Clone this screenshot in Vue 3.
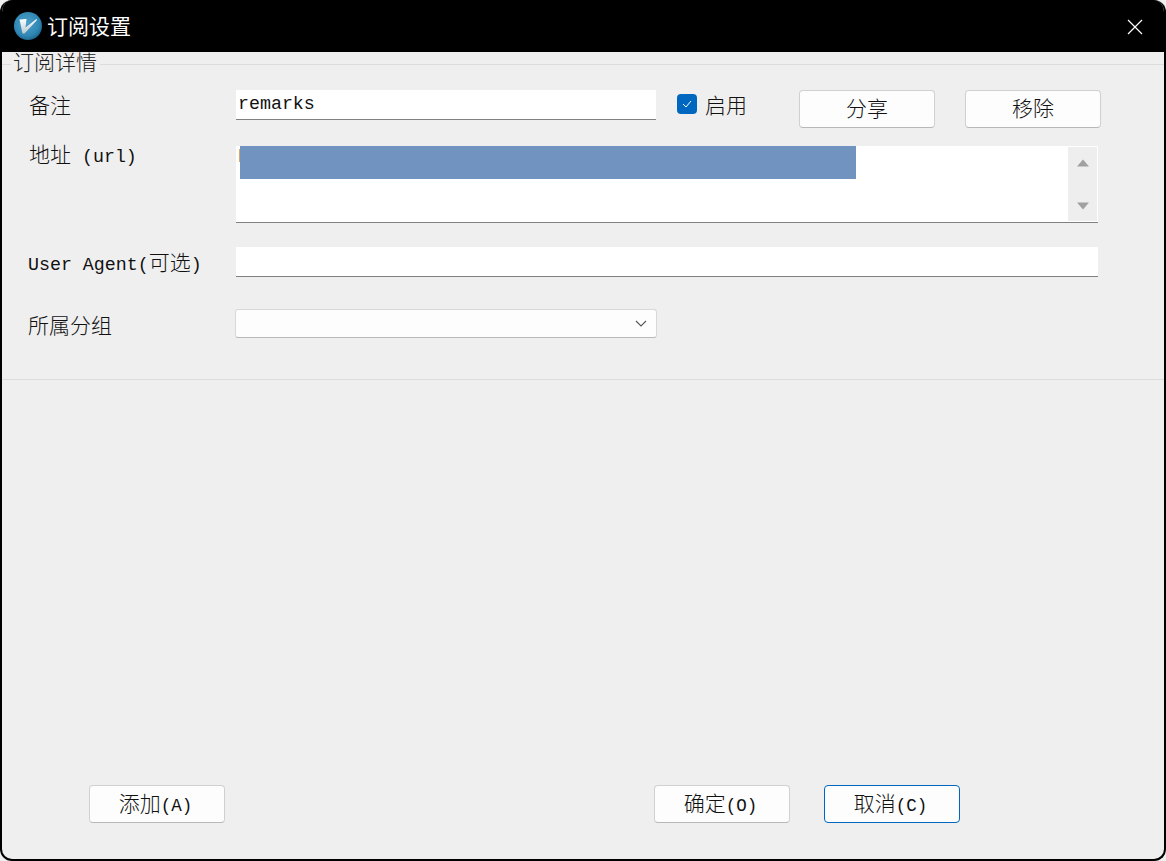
<script setup>
const buttonsTop = [
  { id: 'share', label: '分享' },
  { id: 'remove', label: '移除' },
]
</script>

<template>
  <div class="window">
    <header class="titlebar">
      <svg class="logo" width="30" height="30" viewBox="0 0 30 30">
        <defs>
          <radialGradient id="lg" cx="0.45" cy="0.4" r="0.65">
            <stop offset="0" stop-color="#4ea3c9" />
            <stop offset="0.7" stop-color="#2f86b3" />
            <stop offset="1" stop-color="#1b5f88" />
          </radialGradient>
          <linearGradient id="vg" x1="0" y1="0" x2="0" y2="1">
            <stop offset="0" stop-color="#ffffff" />
            <stop offset="1" stop-color="#b9c9d2" />
          </linearGradient>
        </defs>
        <circle cx="15" cy="15" r="14" fill="url(#lg)" />
        <path d="M6.5 8.5 L13.5 8 L12.5 16.5 L23.5 8 L24 9 L11.5 22.5 L9.5 22.5 Z" fill="url(#vg)" />
      </svg>
      <span class="title cj">订阅设置</span>
      <svg class="close" width="16" height="16" viewBox="0 0 16 16">
        <path d="M1 1 L15 15 M15 1 L1 15" stroke="#fff" stroke-width="1.2" fill="none" />
      </svg>
    </header>

    <fieldset class="group">
      <legend class="legend cj">订阅详情</legend>

      <div class="row row-remarks">
        <label class="label cj label-remarks">备注</label>
        <div class="input input-short mono">remarks</div>
        <span class="check">
          <svg width="12" height="10" viewBox="0 0 12 10">
            <path d="M2 5 L5 8 L10 2" stroke="#fff" stroke-width="1" fill="none" />
          </svg>
        </span>
        <span class="check-label cj">启用</span>
        <button v-for="b in buttonsTop" :key="b.id" class="btn cj" :class="'btn-' + b.id">{{ b.label }}</button>
      </div>

      <div class="row row-url">
        <label class="label label-url"><span class="cj">地址</span><span class="mono"> (url)</span></label>
        <div class="textarea">
          <div class="textarea-text mono">h<span class="selection"></span></div>
          <div class="scroll">
            <svg width="12" height="8" viewBox="0 0 12 8"><path d="M6 0.5 L12 7.5 L0 7.5 Z" fill="#a0a0a0" /></svg>
            <svg width="12" height="8" viewBox="0 0 12 8"><path d="M0 0.5 L12 0.5 L6 7.5 Z" fill="#a0a0a0" /></svg>
          </div>
        </div>
      </div>

      <div class="row row-ua">
        <label class="label label-ua"><span class="mono">User Agent(</span><span class="cj">可选</span><span class="mono">)</span></label>
        <div class="input input-long"></div>
      </div>

      <div class="row row-group">
        <label class="label cj label-group">所属分组</label>
        <div class="combo">
          <svg width="12" height="7" viewBox="0 0 12 7"><path d="M1 1 L6 6 L11 1" stroke="#555" stroke-width="1.1" fill="none" /></svg>
        </div>
      </div>
    </fieldset>

    <div class="spacer"></div>

    <footer class="footer">
      <button class="btn foot-btn foot-add"><span class="cj">添加</span><span class="mono foot-mono">(A)</span></button>
      <button class="btn foot-btn foot-ok"><span class="cj">确定</span><span class="mono foot-mono">(O)</span></button>
      <button class="btn foot-btn btn-focus"><span class="cj">取消</span><span class="mono foot-mono">(C)</span></button>
    </footer>
  </div>
</template>

<style>
html, body { margin: 0; background: #f0f0f0; }
</style>

<style scoped>
.cj {
  font-family: "Noto Sans CJK SC", sans-serif;
  font-weight: 300;
  font-size: 21px;
}
.mono {
  font-family: "Liberation Mono", monospace;
  font-size: 18.3px;
}
.foot-mono { font-size: 17.5px; }
.window {
  box-sizing: border-box;
  width: 1166px;
  height: 861px;
  display: flex;
  flex-direction: column;
  background: #efefef;
  border: 2px solid #000;
  border-top: 0;
  border-radius: 12px;
  overflow: hidden;
  color: #111;
}
.titlebar {
  height: 52px;
  flex: none;
  background: #000;
  margin: 0 -2px;
  display: flex;
  align-items: center;
  color: #fff;
}
.logo { margin-left: 13px; }
.title { margin-left: 4px; line-height: 26px; margin-bottom: 2px; color: #fff; font-weight: 400; }
.close { margin-left: auto; margin-right: 23px; margin-top: 1px; }

.group {
  box-sizing: border-box;
  margin: 0;
  height: 328px;
  padding: 0 0 0 26px;
  border: 0;
  border-top: 1px solid #dcdcdc;
  border-bottom: 1px solid #dcdcdc;
  min-width: 0;
}
.legend {
  margin-left: -17px;
  padding: 0 3px 0 2px;
  line-height: 18px;
  height: 24px;
  color: #222;
}
.row { display: flex; align-items: flex-start; }
.label { width: 208px; flex: none; color: #111; }
.row-remarks { margin-top: 14px; height: 38px; }
.label-remarks { line-height: 28px; padding-left: 1px; width: 207px; }
.input {
  box-sizing: border-box;
  height: 30px;
  background: #fff;
  border-bottom: 1px solid #808080;
  line-height: 28px;
  padding-left: 2px;
}
.input-short { width: 420px; }
.input-long { width: 862px; }
.check {
  box-sizing: border-box;
  width: 20px;
  height: 20px;
  margin: 4px 0 0 21px;
  background: #0067c0;
  border-radius: 4px;
  display: flex;
  align-items: center;
  justify-content: center;
  flex: none;
}
.check-label { margin-left: 8px; line-height: 28px; width: 94px; }
.btn {
  box-sizing: border-box;
  width: 136px;
  height: 38px;
  flex: none;
  padding: 0 0 4px;
  background: #fdfdfd;
  border: 1px solid #d0d0d0;
  border-bottom-color: #b8b8b8;
  border-radius: 4px;
  color: #111;
  line-height: 32px;
}
.foot-btn { padding-right: 3px; }
.btn-remove { margin-left: 30px; }
.btn-focus { border: 1px solid #0067c0; margin-left: 34px; }

.row-url { margin-top: 18px; }
.label-url { line-height: 14px; padding-left: 1px; width: 207px; }
.textarea {
  box-sizing: border-box;
  width: 862px;
  height: 77px;
  background: #fff;
  border-bottom: 1px solid #808080;
  display: flex;
  justify-content: space-between;
}
.textarea-text {
  position: relative;
  flex: 1;
  padding-left: 2px;
  line-height: 22px;
  overflow: hidden;
}
.selection {
  position: absolute;
  left: 4px;
  top: 0;
  width: 616px;
  height: 33px;
  background: #7093bf;
}
.scroll {
  width: 29px;
  background: #eeeeee;
  margin: 1px 1px 1px 0;
  display: flex;
  flex-direction: column;
  align-items: center;
  justify-content: space-between;
  padding: 12px 0 11px;
  box-sizing: border-box;
}
.row-ua { margin-top: 24px; height: 30px; }
.label-ua { line-height: 28px; }
.row-group { margin-top: 32px; }
.label-group { line-height: 30px; width: 207px; }
.combo {
  box-sizing: border-box;
  width: 422px;
  height: 29px;
  background: #fdfdfd;
  border: 1px solid #d8d8d8;
  border-bottom-color: #b8b8b8;
  border-radius: 3px;
  display: flex;
  align-items: center;
  justify-content: flex-end;
  padding-right: 9px;
}

.spacer { flex: 1; }
.footer {
  display: flex;
  height: 38px;
  padding: 0 0 36px 87px;
  flex: none;
}
.foot-add { margin-right: 429px; }
</style>
